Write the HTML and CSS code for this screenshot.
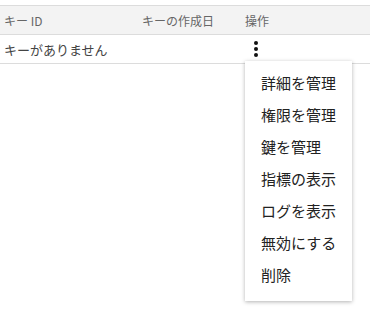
FILE: index.html
```html
<!DOCTYPE html>
<html lang="ja">
<head>
<meta charset="utf-8">
<link rel="stylesheet" href="styles.css">
</head>
<body>
<div class="table">
  <div class="row head">
    <div class="c1">キー ID</div>
    <div class="c2">キーの作成日</div>
    <div class="c3">操作</div>
  </div>
  <div class="row body">
    <div class="c1">キーがありません</div>
    <div class="c2"></div>
    <div class="c3"><span class="kebab"><i></i><i></i><i></i></span></div>
  </div>
  <div class="menu">
    <div class="item">詳細を管理</div>
    <div class="item">権限を管理</div>
    <div class="item">鍵を管理</div>
    <div class="item">指標の表示</div>
    <div class="item">ログを表示</div>
    <div class="item">無効にする</div>
    <div class="item">削除</div>
  </div>
</div>
</body>
</html>
```
FILE: styles.css
```css
html, body { margin: 0; padding: 0; background: #fff; }
body { font-family: "Noto Sans CJK JP", "Noto Sans", sans-serif; min-height: 315px; }
.table { position: relative; padding-top: 5px; min-height: 310px; }
.row { display: flex; align-items: center; }
.head { height: 28px; background: #f3f3f3; border-top: 1px solid #dcdcdc; border-bottom: 1px solid #dcdcdc; font-size: 12px; color: #666; }
.body { height: 28px; border-bottom: 1px solid #dcdcdc; font-size: 13px; color: #444; }
.c1 { width: 142px; padding-left: 4px; box-sizing: border-box; }
.c2 { width: 103px; }
.c3 { flex: 1; }
.kebab { display: flex; flex-direction: column; gap: 2px; margin-left: 9px; }
.kebab i { width: 4px; height: 4px; border-radius: 50%; background: #111; }
.menu { position: absolute; left: 245px; top: 61px; width: 107px; padding: 8px 0; background: #fff; box-shadow: 0 1px 4px rgba(0,0,0,0.3); }
.item { height: 28px; line-height: 28px; padding: 0 0 4px 16px; font-size: 15px; color: #222; }
```
